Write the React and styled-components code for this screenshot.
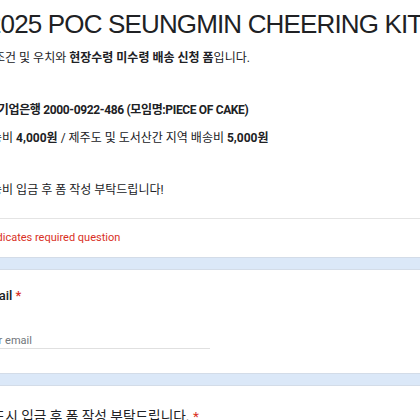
import React from 'react'
import styled, { createGlobalStyle } from 'styled-components'

const GlobalStyle = createGlobalStyle`
    html, body {
        margin: 0;
        padding: 0;
        background: #dbe8f8;
        overflow: hidden;
    }
    body {
        font-family: Roboto, "Noto Sans CJK KR", Arial, sans-serif;
        color: #202124;
    }
`;

const App = () => {
    return (
        <Page>
            <GlobalStyle />
            <Shift>
                <HeaderCard>
                    <Title>2025 POC SEUNGMIN CHEERING KIT</Title>
                    <Description>
                        <Line>의 조건 및 우치와 <b>현장수령 미수령 배송 신청 폼</b>입니다.</Line>
                        <Line />
                        <Line tall tight><b>IBK기업은행 2000-0922-486 (모임명:PIECE OF CAKE)</b></Line>
                        <Line>배송비 <b>4,000원</b> / 제주도 및 도서산간 지역 배송비 <b>5,000원</b></Line>
                        <Line />
                        <Line>배송비 입금 후 폼 작성 부탁드립니다!</Line>
                    </Description>
                    <Required>* Indicates required question</Required>
                </HeaderCard>
                <Card>
                    <Label>Email <Star>*</Star></Label>
                    <Input placeholder="Your email" />
                </Card>
                <QuestionCard>
                    <KoLabel>반드시 입금 후 폼 작성 부탁드립니다. <Star>*</Star></KoLabel>
                </QuestionCard>
            </Shift>
        </Page>
    )
}

export default App

const Page = styled.div`
    width: 420px;
    height: 420px;
    overflow: hidden;
`;
const Shift = styled.div`
    margin-left: -20px;
    width: 460px;
    display: flex;
    flex-direction: column;
    gap: 11px;
`;
const Card = styled.div`
    background: #fff;
    border-top: 1px solid #d3dce8;
    border-bottom: 1px solid #d3dce8;
    padding: 15px 0 24px 0;
`;
const HeaderCard = styled(Card)`
    border-top: none;
    padding: 5px 0 0 0;
`;
const QuestionCard = styled(Card)`
    padding-top: 20px;
`;
const Title = styled.h1`
    margin: 0 0 0 7px;
    font-family: "Liberation Sans", Arial, sans-serif;
    font-weight: 400;
    font-size: 26px;
    letter-spacing: -0.85px;
    line-height: 38px;
    white-space: nowrap;
    color: #202124;
`;
const Description = styled.div`
    margin-top: 2px;
    font-size: 12px;
    padding-bottom: 15px;
    border-bottom: 1px solid #e4e4e4;
`;
const Line = styled.div`
    height: ${(p) => (p.tall ? '28px' : '26px')};
    line-height: 26px;
    letter-spacing: ${(p) => (p.tight ? '-0.35px' : '0')};
    white-space: nowrap;
    b { font-weight: 700; }
`;
const Required = styled.div`
    color: #d93025;
    font-size: 11px;
    line-height: 18px;
    padding: 10px 0 10px;
`;
const Label = styled.div`
    font-size: 13px;
    font-weight: 500;
    line-height: 22px;
`;
const KoLabel = styled(Label)`
    font-size: 13.7px;
    font-weight: 400;
    line-height: 20px;
`;
const Star = styled.span`
    color: #d93025;
`;
const Input = styled.input`
    display: block;
    margin-top: 25px;
    width: 230px;
    height: 16px;
    border: none;
    border-bottom: 1px solid #e0e0e0;
    padding: 0;
    font-family: Roboto, Arial, sans-serif;
    font-size: 11px;
    outline: none;
    background: transparent;
    &::placeholder { color: #70757a; }
`;
